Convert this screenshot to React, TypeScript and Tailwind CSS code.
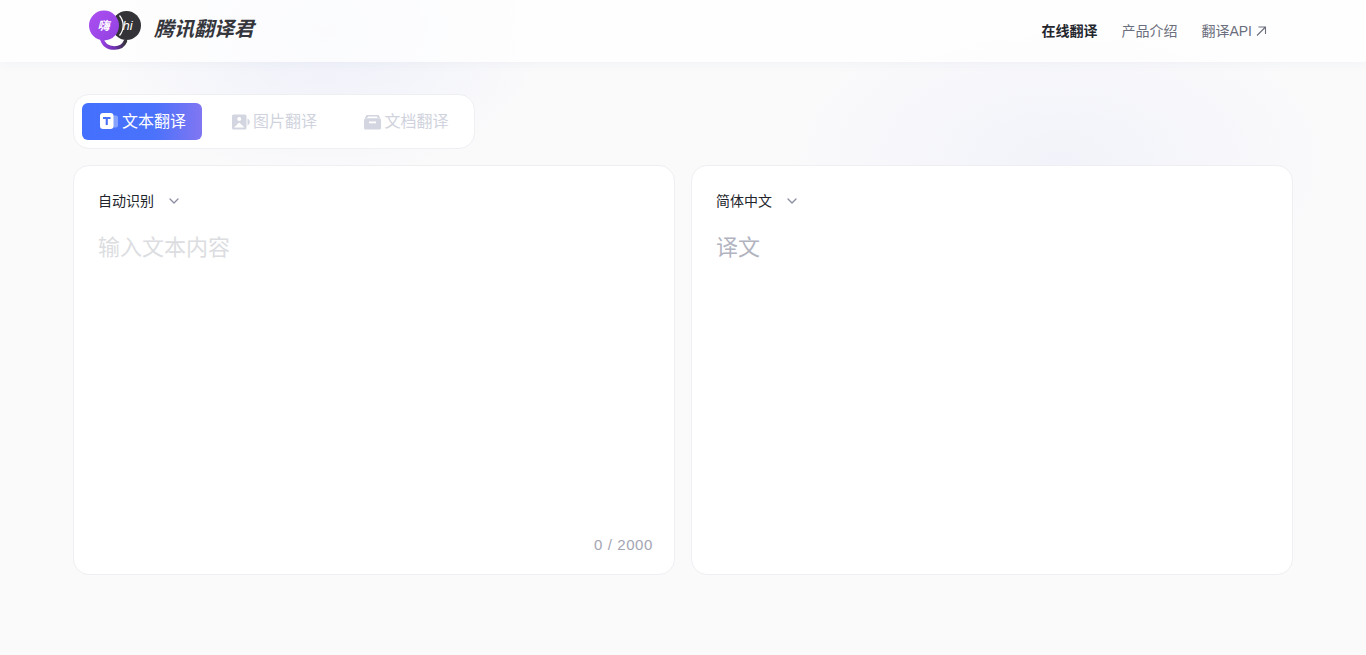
import React from "react";
import { ChevronDown } from "lucide-react";

const FONT = "font-['Liberation_Sans','Noto_Sans_CJK_SC',sans-serif]";

const Logo = () => (
  <svg width="52" height="42" viewBox="0 0 52 42" className="shrink-0">
    <defs>
      <linearGradient id="logoPurple" x1="0" y1="0" x2="1" y2="1">
        <stop offset="0" stopColor="#ad50f2" />
        <stop offset="1" stopColor="#9140e0" />
      </linearGradient>
      <linearGradient id="logoTail" x1="0" y1="0" x2="1" y2="0">
        <stop offset="0" stopColor="#9a42e6" />
        <stop offset="0.6" stopColor="#6a2fa8" />
        <stop offset="1" stopColor="#343438" />
      </linearGradient>
    </defs>
    <circle cx="37.5" cy="15.5" r="14.5" fill="#343438" />
    <path d="M12.5 28c1.5 6.5 6 10 13 10 5.5 0 9-2 11-7" fill="none" stroke="url(#logoTail)" strokeWidth="3.5" strokeLinecap="round" />
    <circle cx="15" cy="15.5" r="15" fill="url(#logoPurple)" />
    <path d="M30.5 5.5a15.5 15.5 0 0 1 0 20" fill="none" stroke="#fff" strokeWidth="1.2" />
    <text x="14.5" y="20" textAnchor="middle" fontSize="12" fontWeight="700" fontStyle="italic" fill="#fff" fontFamily="'Noto Sans CJK SC',sans-serif">嗨</text>
    <text x="38.5" y="20" textAnchor="middle" fontSize="13" fontStyle="italic" fill="#fff" fontFamily="'Liberation Sans',sans-serif">hi</text>
  </svg>
);

const TextIcon = () => (
  <svg width="18" height="17" viewBox="0 0 18 17" className="shrink-0">
    <rect x="8" y="2.5" width="10" height="12" rx="2" fill="#fff" fillOpacity="0.35" />
    <rect x="0" y="0" width="13.5" height="16" rx="3" fill="#fff" />
    <path d="M3 4h7.500v2H7.800v6H5.700V6H3z" fill="#4a6ff8" />
  </svg>
);

const ImageIcon = () => (
  <svg width="18" height="16" viewBox="0 0 18 16" className="shrink-0">
    <rect x="0" y="0.5" width="14.5" height="15" rx="1.5" fill="#d3d6e0" />
    <circle cx="7.2" cy="5" r="2" fill="#fff" />
    <path d="M2 13.5 7.2 8.500l5.300 5z" fill="#fff" />
    <path d="M15.500 4.500c1.600 1 2.300 2.200 2.300 3.500s-.7 2.500-2.300 3.500z" fill="#d3d6e0" />
  </svg>
);

const DocIcon = () => (
  <svg width="17" height="16" viewBox="0 0 17 16" className="shrink-0">
    <path d="M2.500 1h12l2 3.500H.5z" fill="#d3d6e0" />
    <path d="M4 2.500h9l.8 1.500H3.200z" fill="#fff" />
    <rect x="0" y="4.500" width="17" height="11" rx="1.500" fill="#d3d6e0" />
    <rect x="5" y="7.500" width="7" height="1.800" fill="#fff" />
  </svg>
);

const Panel = ({ language, children }: { language: string; children: React.ReactNode }) => (
  <section className="relative h-[410px] flex-1 rounded-[16px] border border-[#eeeff3] bg-white pl-6 pr-[22px] pt-[26px]">
    <div className="flex h-[18px] items-center gap-[12px] text-[14px] leading-[18px] text-[#22242b]">
      {language}
      <ChevronDown size={16} strokeWidth={2} className="text-[#8c8fa3]" />
    </div>
    {children}
  </section>
);

export default function App() {
  return (
    <div className={`relative h-[655px] w-full overflow-hidden bg-[#fafafb] ${FONT}`}>
      {/* faint colour washes behind the panels */}
      <div className="pointer-events-none absolute left-[100px] top-[-120px] h-[300px] w-[450px] rounded-full bg-[radial-gradient(closest-side,#eef0fa,transparent)]" />
      <div className="pointer-events-none absolute left-[780px] top-[0px] h-[320px] w-[560px] rounded-full bg-[radial-gradient(closest-side,#f2f3fa,transparent)]" />

      <header className="relative flex h-[62px] items-center justify-between bg-white/75 pl-[89px] pr-[98px] shadow-[0_2px_10px_rgba(60,70,110,0.04)]">
        <div className="flex items-center gap-[13px]">
          <Logo />
          <span className="pb-[4px] text-[20px] font-bold italic leading-[28px] text-[#35363b]">腾讯翻译君</span>
        </div>
        <nav className="flex items-center gap-6 text-[14px] leading-5 text-[#6b6e7c]">
          <span className="font-bold text-[#23252c]">在线翻译</span>
          <span>产品介绍</span>
          <span className="flex items-center gap-[2px]">
            翻译API
            <svg width="14" height="14" viewBox="0 0 14 14" fill="none" stroke="currentColor" strokeWidth="1.1">
              <path d="M3 11.500 11 3.500M4.500 3H11.500V10" />
            </svg>
          </span>
        </nav>
      </header>

      <main className="relative ml-[73px] w-[1220px] pt-8">
        <div className="flex h-[55px] w-[402px] items-center rounded-[16px] border border-[#eeeff3] bg-white pl-2 text-[16px]">
          <button className="flex h-[37px] w-[120px] items-center justify-center gap-[4px] rounded-[6px] bg-[linear-gradient(90deg,#4470ff_0%,#4a72fb_60%,#8176f2_100%)] pl-[2px] text-white">
            <TextIcon />
            文本翻译
          </button>
          <div className="flex w-[145px] items-center justify-center gap-[3px] text-[#d0d3dd]">
            <ImageIcon />
            图片翻译
          </div>
          <div className="flex w-[119px] items-center justify-center gap-[3px] text-[#d0d3dd]">
            <DocIcon />
            文档翻译
          </div>
        </div>

        <div className="mt-4 flex gap-4">
          <Panel language="自动识别">
            <p className="mt-[22px] text-[22px] leading-[32px] text-[#dcdde1]">输入文本内容</p>
            <span className="absolute bottom-[19px] right-[21px] text-[15px] leading-5 tracking-[0.6px] text-[#a3a5b3]">0 / 2000</span>
          </Panel>
          <Panel language="简体中文">
            <p className="mt-[22px] text-[22px] leading-[32px] text-[#b1b3bf]">译文</p>
          </Panel>
        </div>
      </main>
    </div>
  );
}
